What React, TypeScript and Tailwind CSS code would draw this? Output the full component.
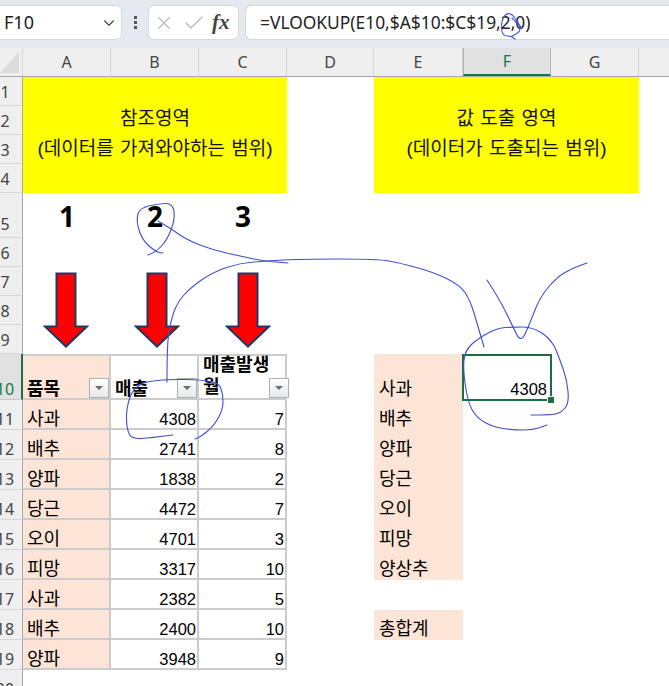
import { Check, ChevronDown, X } from "lucide-react";

const FONT = "font-['Liberation_Sans','Noto_Sans_CJK_KR',sans-serif]";

const rowCount = 20;
const columns = ["A", "B", "C", "D", "E", "F", "G"];

const tableRows: [string, number, number][] = [
  ["사과", 4308, 7],
  ["배추", 2741, 8],
  ["양파", 1838, 2],
  ["당근", 4472, 7],
  ["오이", 4701, 3],
  ["피망", 3317, 10],
  ["사과", 2382, 5],
  ["배추", 2400, 10],
  ["양파", 3948, 9],
];

const lookupNames = ["사과", "배추", "양파", "당근", "오이", "피망", "양상추"];

// hand drawn pen strokes on top of the sheet
const strokes: [number, number][][] = [
  [[148, 255], [156, 252], [167, 240], [175, 220], [173, 203], [157, 204], [140, 208], [136, 220], [142, 240], [156, 252], [163, 253]],
  [[158, 221], [170, 228], [187, 240], [213, 250], [240, 256], [263, 261], [288, 263]],
  [[167, 382], [167, 347], [170, 323], [177, 303], [190, 288], [213, 272], [240, 263], [267, 261], [300, 259], [378, 259], [400, 263], [433, 272], [460, 285], [470, 300], [477, 323], [484, 347]],
  [[487, 280], [500, 300], [513, 327], [521, 343], [530, 323], [540, 297], [557, 277], [573, 268], [587, 263]],
  [[531, 415], [553, 415], [562, 412], [569, 403], [567, 380], [560, 360], [552, 340], [533, 327], [513, 327], [498, 328], [480, 337], [465, 350], [463, 370], [468, 403], [477, 418], [493, 427], [513, 430], [533, 430], [547, 425]],
  [[173, 435], [150, 438], [132, 439], [127, 430], [126, 410], [133, 387], [155, 379], [217, 380], [223, 393], [223, 410], [213, 427], [200, 437], [195, 439]],
  [[515, 39], [512, 36], [503, 36], [501, 27], [503, 17], [508, 13], [513, 15], [520, 25], [520, 32], [512, 36]],
  [[512, 18], [522, 28]],
];

function smoothPath(points: [number, number][]) {
  let d = `M${points[0][0]} ${points[0][1]}`;
  for (let i = 1; i < points.length - 1; i++) {
    const [x, y] = points[i];
    const [nx, ny] = points[i + 1];
    d += ` Q${x} ${y} ${(x + nx) / 2} ${(y + ny) / 2}`;
  }
  const last = points[points.length - 1];
  return `${d} L${last[0]} ${last[1]}`;
}

function FilterButton() {
  return (
    <span className="flex h-[20px] w-[20px] shrink-0 items-center justify-center border border-[#b0b0b0] bg-gradient-to-b from-white to-[#e6e8ee]">
      <span className="h-0 w-0 border-x-[4px] border-t-[4px] border-x-transparent border-t-[#6b6b6b]" />
    </span>
  );
}

function DownArrow() {
  return (
    <svg width="46" height="76" viewBox="0 0 46 76">
      <path
        d="M13.5 1.5H32.5V54.5H44L23 74.5L2 54.5H13.5Z"
        fill="#ff0000"
        stroke="#1f3864"
        strokeWidth="2"
      />
    </svg>
  );
}

export default function App() {
  return (
    <div className={`relative h-[686px] w-[669px] overflow-hidden bg-white text-[16.5px] text-black ${FONT}`}>
      {/* formula bar */}
      <div className="flex h-[48px] items-start gap-[6px] bg-[#e6e9ef] pt-[5px]">
        <div className="-ml-[2px] flex h-[35px] w-[124px] items-center justify-between rounded-r-[6px] border border-[#d5d7db] bg-white pl-[5px] pr-[3px] font-['Noto_Sans',sans-serif] text-[18px] text-[#222]">
          F10
          <ChevronDown size={18} strokeWidth={1.5} className="text-[#444]" />
        </div>
        <div className="flex h-[35px] w-[14px] flex-col items-center justify-center gap-[2px]">
          <span className="h-[3px] w-[3px] bg-[#555]" />
          <span className="h-[3px] w-[3px] bg-[#555]" />
          <span className="h-[3px] w-[3px] bg-[#555]" />
        </div>
        <div className="flex h-[35px] w-[91px] items-center rounded-[6px] border border-[#d5d7db] bg-white pl-[4px] text-[#b5b5b5]">
          <X size={22} strokeWidth={1.2} />
          <Check size={24} strokeWidth={1.2} className="ml-[7px]" />
          <span className="ml-[6px] font-['Liberation_Serif',serif] text-[21px] font-bold italic text-[#444]">fx</span>
        </div>
        <div className="flex h-[35px] flex-1 items-center rounded-l-[6px] border border-r-0 border-[#d5d7db] bg-white pl-[14px] font-['Noto_Sans',sans-serif] text-[17.4px] text-[#222]">
          =VLOOKUP(E10,$A$10:$C$19,2,0)
        </div>
      </div>

      {/* column headers */}
      <div className="grid h-[29px] grid-cols-[23px_88px_88px_88px_87px_89px_88px_88px_1fr] border-b border-[#a8a8a8] bg-[#efefef] font-['Noto_Sans',sans-serif] text-[16px] text-[#444]">
        <div className="relative border-r border-[#d6d6d6]">
          <svg width="20" height="22" viewBox="0 0 20 22" className="absolute left-0 top-[4px]">
            <path d="M19 0V21H0Z" fill="#dcdcdc" />
          </svg>
        </div>
        {columns.map((c) =>
          c === "F" ? (
            <div key={c} className="flex items-center justify-center border-x border-b-2 border-x-[#b0b0b0] border-b-[#107c41] bg-[#e1e1e1] text-[#107c41]">
              {c}
            </div>
          ) : (
            <div key={c} className="flex items-center justify-center border-r border-[#d6d6d6]">
              {c}
            </div>
          )
        )}
        <div />
      </div>

      {/* sheet */}
      <div className="grid grid-cols-[23px_88px_88px_88px_87px_89px_88px_88px_1fr] grid-rows-[29px_29px_29px_29px_45px_29px_29px_29px_29px_46px_30px_30px_30px_30px_30px_30px_30px_30px_30px_30px]">
        {Array.from({ length: rowCount }, (_, i) => (
          <div
            key={i}
            style={{ gridRow: i + 1, gridColumn: 1 }}
            className={
              i === 9
                ? "flex items-end border-r-2 border-r-[#1e6c41] border-b border-b-[#c8c8c8] bg-[#e1e1e1] font-['Noto_Sans',sans-serif] text-[16px] leading-[20px] text-[#107c41]"
                : i > 9
                  ? "flex items-end border-r border-r-[#a8a8a8] border-b border-b-[#d8d8d8] bg-[#efefef] font-['Noto_Sans',sans-serif] text-[16px] leading-[20px] text-[#444]"
                  : "flex items-end border-r border-r-[#a8a8a8] border-b border-b-[#d8d8d8] bg-[#efefef] pb-[3px] font-['Noto_Sans',sans-serif] text-[16px] leading-[20px] text-[#444]"
            }
          >
            <span className="flex w-[10px] justify-center whitespace-nowrap">{i + 1}</span>
          </div>
        ))}

        {/* yellow merged blocks */}
        <div className="col-span-3 col-start-2 row-span-4 row-start-1 flex flex-col items-center justify-center bg-[#ffff00] pb-[2px] text-[19px] leading-[30px] text-[#111] [word-spacing:1px]">
          <div>참조영역</div>
          <div>(데이터를 가져와야하는 범위)</div>
        </div>
        <div className="col-span-3 col-start-6 row-span-4 row-start-1 flex flex-col items-center justify-center bg-[#ffff00] pb-[2px] text-[19px] leading-[30px] text-[#111] [word-spacing:1px]">
          <div>값 도출 영역</div>
          <div>(데이터가 도출되는 범위)</div>
        </div>

        {/* column numbers */}
        <div className="col-start-2 row-start-5 flex justify-center pt-[5px] font-['Noto_Sans',sans-serif] text-[28px] font-bold leading-[36px]">1</div>
        <div className="col-start-3 row-start-5 flex justify-center pt-[5px] font-['Noto_Sans',sans-serif] text-[28px] font-bold leading-[36px]">2</div>
        <div className="col-start-4 row-start-5 flex justify-center pt-[5px] font-['Noto_Sans',sans-serif] text-[28px] font-bold leading-[36px]">3</div>

        {/* arrows */}
        <div className="col-start-2 row-span-3 row-start-7 pl-[20px] pt-[5px]"><DownArrow /></div>
        <div className="col-start-3 row-span-3 row-start-7 pl-[23px] pt-[5px]"><DownArrow /></div>
        <div className="col-start-4 row-span-3 row-start-7 pl-[26px] pt-[5px]"><DownArrow /></div>

        {/* table header */}
        <div className="col-start-2 row-start-10 flex items-end justify-between border-y-2 border-r-2 border-[#cccccc] bg-[#fce4d6] pl-[4px] text-[18px] font-bold leading-[18px]">
          <span>품목</span>
          <FilterButton />
        </div>
        <div className="col-start-3 row-start-10 flex items-end justify-between border-y-2 border-r-2 border-[#cccccc] pl-[4px] text-[18px] font-bold leading-[18px]">
          <span>매출</span>
          <FilterButton />
        </div>
        <div className="col-start-4 row-start-10 flex items-end justify-between border-y-2 border-r-2 border-[#cccccc] pl-[4px] text-[18px] font-bold leading-[22px]">
          <span className="whitespace-nowrap">매출발생<br />월</span>
          <FilterButton />
        </div>

        {/* table body */}
        {tableRows.map(([name, sales, month], i) => (
          <div key={i} className="contents">
            <div style={{ gridRow: i + 11, gridColumn: 2 }} className="flex items-end border-r-2 border-b-2 border-[#cccccc] bg-[#fce4d6] pl-[4px] text-[18px] leading-[18px]">
              {name}
            </div>
            <div style={{ gridRow: i + 11, gridColumn: 3 }} className="flex items-end justify-end border-r-2 border-b-2 border-[#cccccc] pr-[1px] leading-[18px]">
              {sales}
            </div>
            <div style={{ gridRow: i + 11, gridColumn: 4 }} className="flex items-end justify-end border-r-2 border-b-2 border-[#cccccc] pr-[1px] leading-[18px]">
              {month}
            </div>
          </div>
        ))}

        {/* lookup column */}
        {lookupNames.map((name, i) => (
          <div key={name} style={{ gridRow: i + 10, gridColumn: 6 }} className="flex items-end bg-[#fce4d6] pl-[5px] text-[18px] leading-[22px]">
            {name}
          </div>
        ))}
        <div className="col-start-6 row-start-18 flex items-end bg-[#fce4d6] pl-[5px] text-[18px] leading-[22px]">총합계</div>

        {/* selected cell */}
        <div className="relative col-start-7 row-start-10 flex items-end justify-end pr-[4px] leading-[22px]">
          4308
          <div className="absolute -inset-x-[1px] -bottom-[1px] top-0 border-2 border-[#1e6c41]" />
          <div className="absolute -bottom-[3px] -right-[3px] h-[6px] w-[6px] bg-[#1e6c41] outline outline-1 outline-white" />
        </div>
      </div>

      {/* pen annotations */}
      <svg width="669" height="686" viewBox="0 0 669 686" className="pointer-events-none absolute left-0 top-0" fill="none">
        {strokes.map((points, i) => (
          <path key={i} d={smoothPath(points)} stroke="#3f4fd0" strokeWidth="1.1" strokeLinejoin="round" strokeLinecap="round" />
        ))}
      </svg>
    </div>
  );
}
